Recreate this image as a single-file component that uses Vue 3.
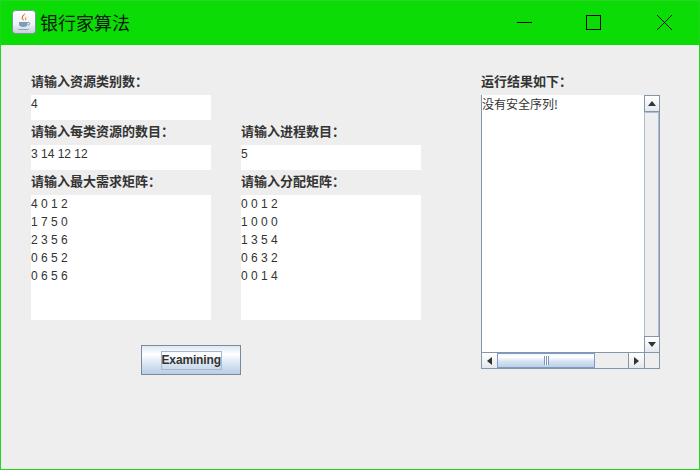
<script setup>
const maxMatrix = ['4 0 1 2', '1 7 5 0', '2 3 5 6', '0 6 5 2', '0 6 5 6']
const allocMatrix = ['0 0 1 2', '1 0 0 0', '1 3 5 4', '0 6 3 2', '0 0 1 4']
</script>

<template>
  <div class="window">
    <div class="titlebar">
      <svg class="appicon" width="24" height="24" viewBox="0 0 24 24">
        <defs>
          <linearGradient id="ig" x1="0" y1="0" x2="0" y2="1">
            <stop offset="0" stop-color="#ffffff" />
            <stop offset="0.6" stop-color="#eef1f4" />
            <stop offset="1" stop-color="#c4d0de" />
          </linearGradient>
        </defs>
        <rect x="0.5" y="0.5" width="23" height="23" rx="3" fill="url(#ig)" stroke="#7f93a8" />
        <path d="M12.5 3c1.5 2-2.5 3.200-1.500 5.500.4 1 1 1.500 1 2.200-1.500-.8-3-2.200-2.200-4C10.500 5 12.500 4.500 12.500 3z" fill="#e0762a" />
        <path d="M14.500 6.500c-1.500 1-2 1.800-1.400 3 .2.500.4.800.3 1.200.9-.8 1.300-1.600.8-2.600-.3-.6-.2-1 .3-1.600z" fill="#e89a5c" />
        <path d="M7 12h8.500v2.500c0 1.500-1.500 2.500-4.200 2.500S7 16 7 14.500z" fill="#7d9cbc" />
        <path d="M15.500 12.500c2.500-.5 3.200 1.800.5 3" fill="none" stroke="#6d8cb0" stroke-width="1" />
        <path d="M5.500 18.500c3 1.200 9 1.200 12 0-1 2-11 2-12 0z" fill="#5f84ab" />
      </svg>
      <span class="title">银行家算法</span>
      <div class="controls">
        <svg class="ctl" width="46" height="44" viewBox="0 1 46 44"><path d="M16 22.500h15" stroke="#000" fill="none" /></svg>
        <svg class="ctl" width="46" height="44" viewBox="0 1 46 44"><rect x="15.500" y="15.500" width="14" height="14" stroke="#000" fill="none" /></svg>
        <svg class="ctl" width="46" height="44" viewBox="0 1 46 44"><path d="M16 15l15 15M31 15L16 30" stroke="#000" fill="none" stroke-width="0.9" /></svg>
      </div>
    </div>

    <div class="content">
      <div class="forms">
        <div class="grid">
          <div class="cell">
            <label>请输入资源类别数：</label>
            <div class="field">4</div>
          </div>
          <div class="cell"></div>
          <div class="cell">
            <label>请输入每类资源的数目：</label>
            <div class="field">3 14 12 12</div>
          </div>
          <div class="cell">
            <label>请输入进程数目：</label>
            <div class="field">5</div>
          </div>
          <div class="cell">
            <label>请输入最大需求矩阵：</label>
            <div class="area">
              <div v-for="row in maxMatrix" :key="row" class="row">{{ row }}</div>
            </div>
          </div>
          <div class="cell">
            <label>请输入分配矩阵：</label>
            <div class="area">
              <div v-for="row in allocMatrix" :key="row" class="row">{{ row }}</div>
            </div>
          </div>
        </div>
        <div class="actions">
          <button class="btn"><span class="focus">Examining</span></button>
        </div>
      </div>

      <div class="result">
        <label>运行结果如下：</label>
        <div class="scrollpane">
          <div class="top">
            <div class="output">没有安全序列!</div>
            <div class="vbar">
              <div class="arrow"><i class="tri up"></i></div>
              <div class="vtrack"></div>
              <div class="arrow"><i class="tri down"></i></div>
            </div>
          </div>
          <div class="hbar">
            <div class="arrow h"><i class="tri left"></i></div>
            <div class="hthumb"><span class="grip"></span></div>
            <div class="htrack"></div>
            <div class="arrow h"><i class="tri right"></i></div>
            <div class="corner"></div>
          </div>
        </div>
      </div>
    </div>
  </div>
</template>

<style>
html, body {
  margin: 0;
  background: #eeeeee;
}
</style>

<style scoped>
.window {
  width: 700px;
  height: 470px;
  box-sizing: border-box;
  display: flex;
  flex-direction: column;
  background: #eeeeee;
  border: 1px solid #22d41d;
  border-top: 0;
  overflow: hidden;
  font-family: "Liberation Sans", "Noto Sans CJK SC", sans-serif;
}
.titlebar {
  height: 45px;
  box-sizing: border-box;
  flex: none;
  display: flex;
  align-items: center;
  padding-left: 11px;
  background: #0cdc06;
  border-top: 1px solid #2bd326;
}
.appicon {
  flex: none;
  margin-top: -3px;
}
.title {
  margin-left: 4px;
  font: 18px "Noto Sans CJK SC", sans-serif;
  color: #0a1a0a;
  margin-top: -2px;
}
.controls {
  margin-left: auto;
  display: flex;
  gap: 24px;
  padding-right: 12px;
}
.ctl {
  display: block;
}
.content {
  flex: 1;
  display: flex;
  padding: 30px 0 0 30px;
}
.forms {
  width: 390px;
}
.grid {
  display: grid;
  grid-template-columns: 180px 180px;
  column-gap: 30px;
  row-gap: 5px;
}
label {
  display: block;
  height: 20px;
  font: bold 13px/12px "Noto Sans CJK SC", sans-serif;
  color: #333333;
}
.field {
  height: 25px;
  line-height: 18px;
  background: #fff;
  font-size: 12px;
  color: #333333;
}
.area {
  height: 125px;
  background: #fff;
  font-size: 12px;
  color: #333333;
}
.row {
  height: 18px;
  line-height: 18px;
}
.actions {
  padding: 25px 0 0 110px;
}
.btn {
  display: flex;
  align-items: center;
  justify-content: center;
  width: 100px;
  height: 30px;
  padding: 0;
  border: 1px solid #7a8a9c;
  background: linear-gradient(#dde8f3 0, #ffffff 30%, #dce7f2 60%, #b8cfe5 100%);
}
.focus {
  display: block;
  width: 61px;
  height: 19px;
  box-sizing: border-box;
  border: 1px solid #a8b8cc;
  font: bold 12px/17px "Liberation Sans", sans-serif;
  letter-spacing: -0.15px;
  text-align: center;
  color: #333333;
}
.result {
  margin-left: 60px;
  width: 179px;
}
.scrollpane {
  width: 179px;
  height: 274px;
  box-sizing: border-box;
  border: 1px solid #8496a8;
  display: flex;
  flex-direction: column;
}
.top {
  flex: 1;
  min-height: 0;
  display: flex;
}
.output {
  flex: 1;
  background: #fff;
  font: 12px/18px "Noto Sans CJK SC", sans-serif;
  color: #333333;
  margin-top: -1px;
}
.vbar {
  width: 15px;
  flex: none;
  display: flex;
  flex-direction: column;
}
.arrow {
  height: 16px;
  flex: none;
  display: flex;
  align-items: center;
  justify-content: center;
  background: linear-gradient(#ffffff, #e4e8ee);
  border-bottom: 1px solid #8496a8;
  border-left: 1px solid #8496a8;
  box-sizing: border-box;
}
.vbar .arrow:last-child {
  border-bottom: 0;
  border-top: 1px solid #8496a8;
}
.vtrack {
  flex: 1;
  box-sizing: border-box;
  background: #eeeeee;
  border: 1px solid #a9bfd8;
  border-bottom: 0;
}
.tri {
  display: block;
  width: 0;
  height: 0;
}
.tri.up {
  border: 4px solid transparent;
  border-top: 0;
  border-bottom: 5px solid #333;
}
.tri.down {
  border: 4px solid transparent;
  border-bottom: 0;
  border-top: 5px solid #333;
}
.tri.left {
  border: 4px solid transparent;
  border-left: 0;
  border-right: 5px solid #333;
}
.tri.right {
  border: 4px solid transparent;
  border-right: 0;
  border-left: 5px solid #333;
}
.hbar {
  height: 16px;
  box-sizing: border-box;
  flex: none;
  display: flex;
  border-top: 1px solid #8496a8;
}
.arrow.h {
  width: 15px;
  height: 100%;
  border-bottom: 0;
  border-left: 0;
  background: linear-gradient(#ffffff, #e4e8ee);
}
.hthumb {
  width: 98px;
  box-sizing: border-box;
  border: 1px solid #7d9cc8;
  background: linear-gradient(#f4f7fb 0, #ffffff 25%, #d8e4f0 55%, #bcd0e6 100%);
  display: flex;
  align-items: center;
  justify-content: center;
}
.grip {
  display: block;
  width: 5px;
  height: 9px;
  background: repeating-linear-gradient(90deg, #7d96c0 0 1px, #ffffff 1px 2px);
}
.htrack {
  flex: 1;
  background: #eeeeee;
  border-right: 1px solid #8496a8;
}
.corner {
  width: 15px;
  flex: none;
  border-left: 1px solid #8496a8;
  background: #eeeeee;
  box-sizing: border-box;
}
</style>
